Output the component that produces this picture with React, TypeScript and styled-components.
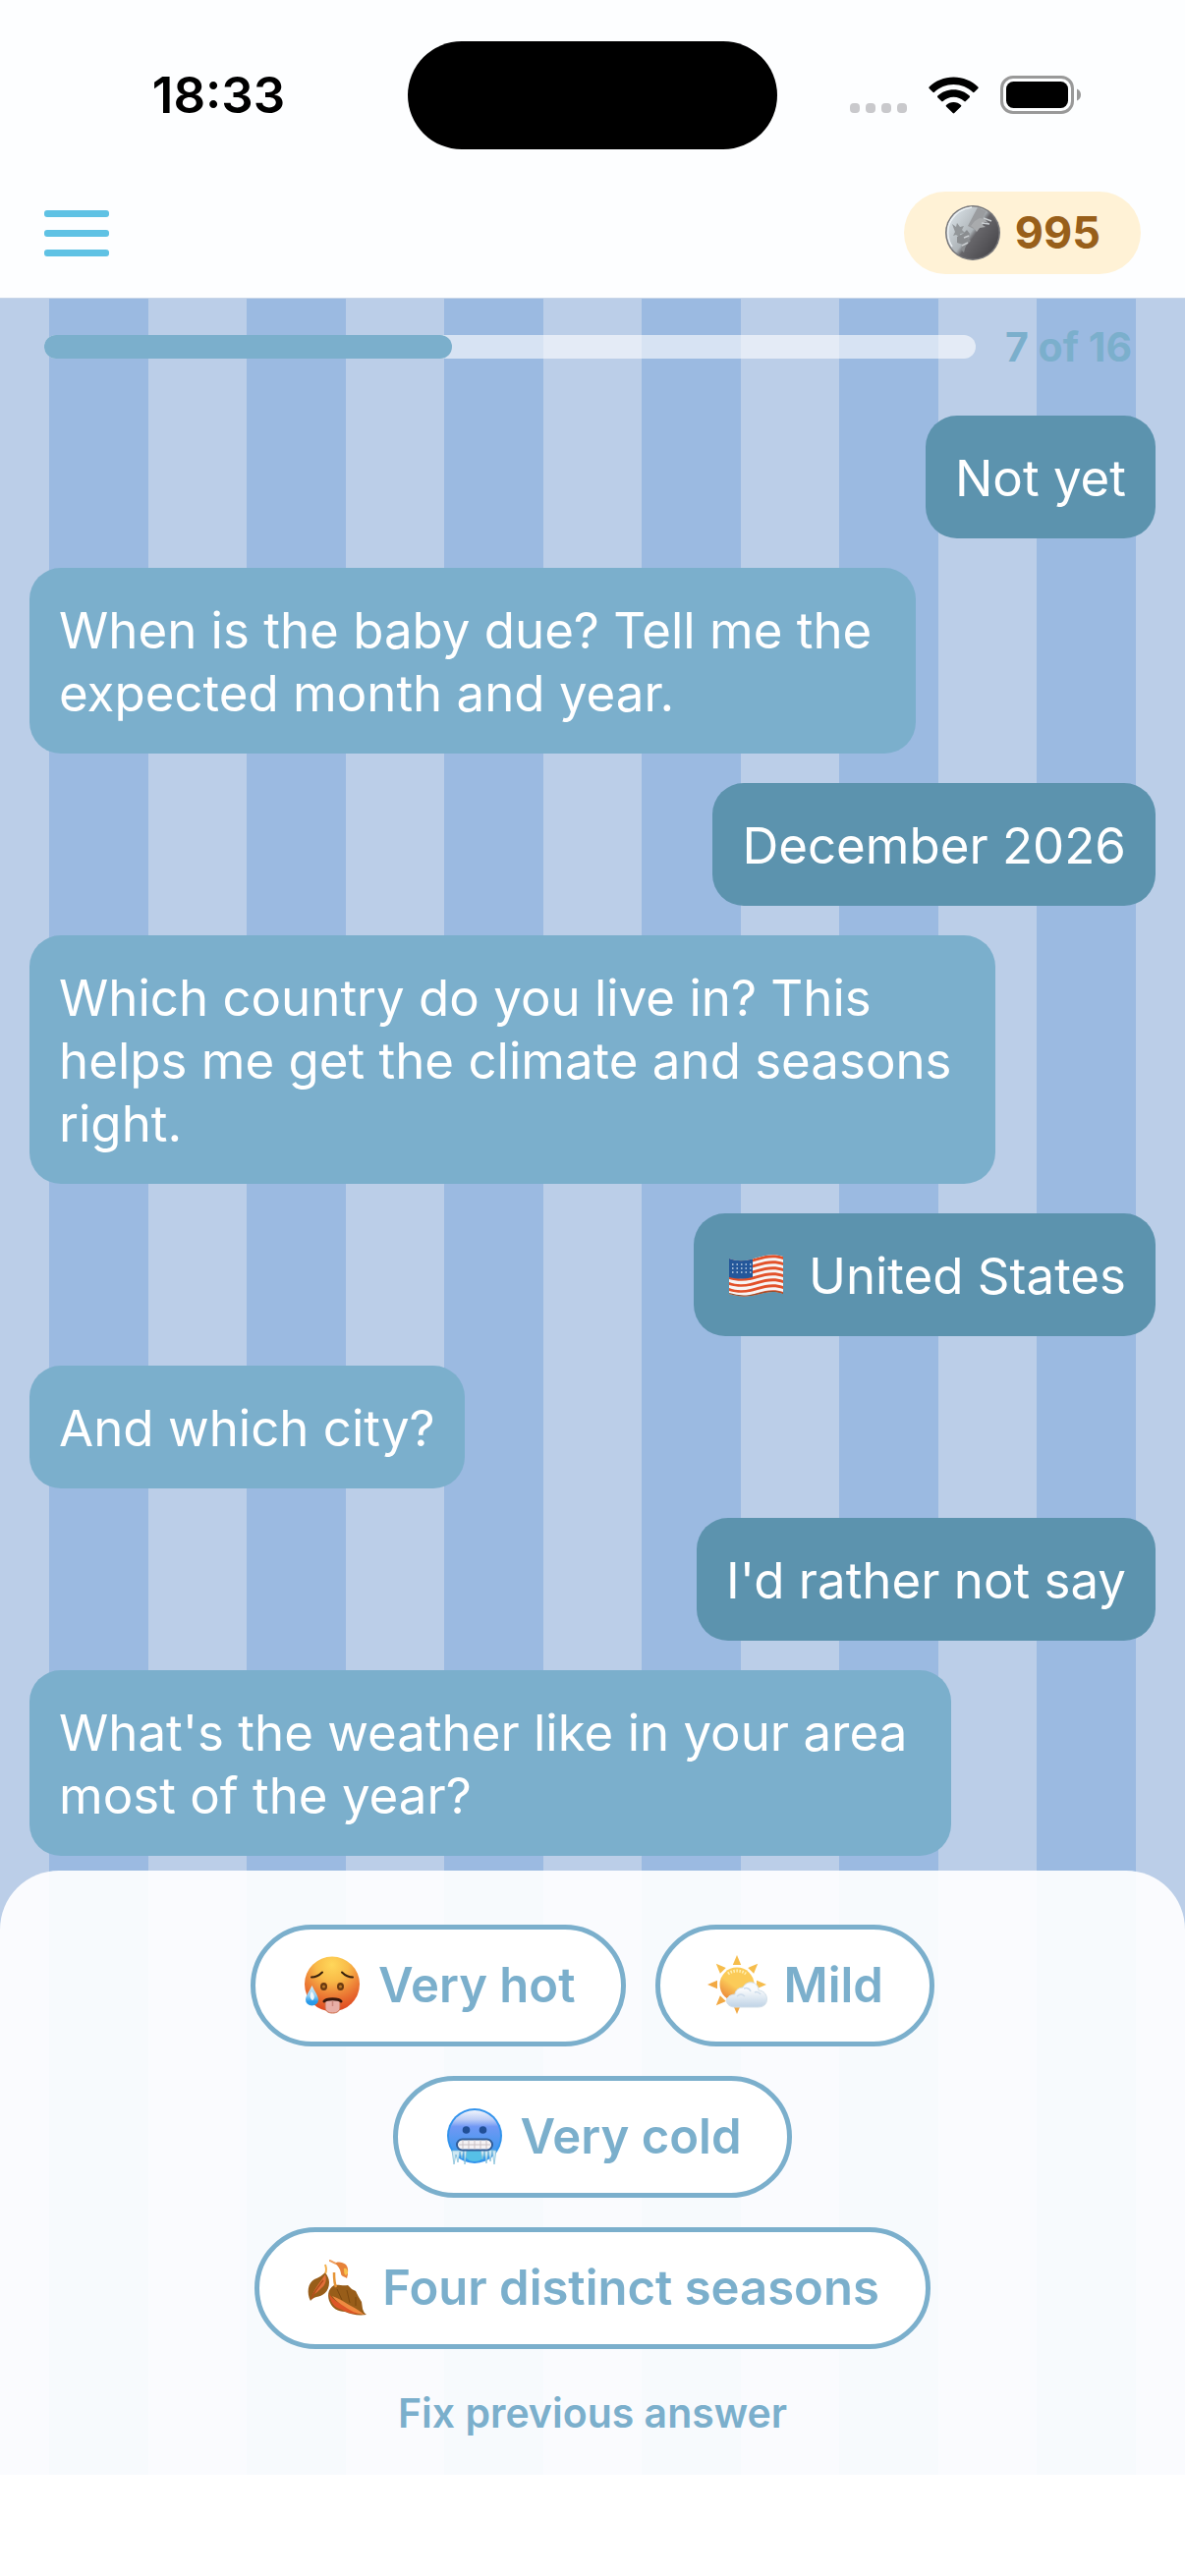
import React from "react";
import styled, { createGlobalStyle } from "styled-components";

const color = {
  page: "#fdfeff",
  stripeLight: "#bbcee8",
  stripeDark: "#9bbae1",
  accent: "#7bafcc",
  answer: "#5c93ae",
  menu: "#5fc2e4",
  pill: "#fff2d6",
  coins: "#985f1a",
};

const GlobalStyle = createGlobalStyle`
  *, *::before, *::after { box-sizing: border-box; }
  body {
    margin: 0;
    background: #ffffff;
    font-family: Inter, "Liberation Sans", sans-serif;
  }
  button { font-family: inherit; cursor: pointer; }
`;

const Screen = styled.div`
  display: flex;
  flex-direction: column;
  min-height: 100vh;
`;

const StatusBar = styled.div`
  display: grid;
  grid-template-columns: 1fr 376px 1fr;
  align-items: center;
  padding: 42px 0 33px;
  background: ${color.page};
`;

const Clock = styled.time`
  justify-self: center;
  padding-left: 30px;
  font-size: 51px;
  line-height: 60px;
  font-weight: 600;
  color: #000000;
`;

const Island = styled.div`
  height: 110px;
  border-radius: 55px;
  background: #000000;
`;

const StatusIcons = styled.div`
  display: flex;
  align-items: center;
  justify-self: center;
  gap: 22px;
  padding-right: 32px;
  svg { display: block; }
`;

const TopBar = styled.header`
  display: flex;
  align-items: center;
  justify-content: space-between;
  padding: 10px 45px 24px;
  background: ${color.page};
  border-bottom: 1px solid #c9d6e8;
`;

const MenuButton = styled.button`
  display: flex;
  flex-direction: column;
  gap: 13px;
  width: 66px;
  padding: 0;
  border: 0;
  background: none;
`;

const MenuLine = styled.span`
  height: 7px;
  border-radius: 3px;
  background: ${color.menu};
`;

const CoinPill = styled.button`
  display: flex;
  align-items: center;
  gap: 14px;
  height: 84px;
  padding: 0 41px;
  border: 0;
  border-radius: 42px;
  background: ${color.pill};
  color: ${color.coins};
  font-size: 45px;
  line-height: 54px;
  font-weight: 700;
  svg { display: block; }
`;

const Conversation = styled.main`
  flex: 1;
  display: flex;
  flex-direction: column;
  background-image: linear-gradient(
    to right,
    ${color.stripeLight} 25%,
    ${color.stripeDark} 25% 75%,
    ${color.stripeLight} 75%
  );
  background-size: calc(100% / 6) 100%;
`;

const ProgressRow = styled.div`
  display: flex;
  align-items: center;
  gap: 30px;
  padding: 24px 45px 45px;
`;

const Track = styled.div`
  flex: 1;
  height: 24px;
  border-radius: 12px;
  background: rgba(255, 255, 255, 0.6);
`;

const Fill = styled.div`
  height: 100%;
  border-radius: 12px;
  background: ${color.accent};
`;

const StepLabel = styled.span`
  min-width: 138px;
  font-size: 41px;
  line-height: 50px;
  font-weight: 700;
  color: ${color.accent};
  white-space: nowrap;
`;

const Messages = styled.div`
  flex: 1;
  display: flex;
  flex-direction: column;
  gap: 30px;
  padding: 0 30px 15px;
`;

const Bubble = styled.p<{ $mine?: boolean }>`
  align-self: ${(p) => (p.$mine ? "flex-end" : "flex-start")};
  display: flex;
  align-items: center;
  gap: 22px;
  max-width: 88%;
  margin: 0;
  padding: 32px 30px 29px;
  border-radius: 32px;
  background: ${(p) => (p.$mine ? color.answer : color.accent)};
  color: #ffffff;
  font-size: 51px;
  line-height: 64px;
  white-space: break-spaces;
  svg { display: block; }
`;

const AnswerPanel = styled.section`
  display: flex;
  flex-direction: column;
  align-items: center;
  gap: 40px;
  padding: 55px 45px 38px;
  border-radius: 60px 60px 0 0;
  background: rgba(255, 255, 255, 0.92);
`;

const Choices = styled.div`
  display: flex;
  flex-wrap: wrap;
  justify-content: center;
  gap: 30px;
`;

const Choice = styled.button`
  display: flex;
  align-items: center;
  gap: 16px;
  height: 124px;
  padding: 0 47px;
  border: 5px solid ${color.accent};
  border-radius: 62px;
  background: #ffffff;
  color: ${color.accent};
  font-size: 49px;
  line-height: 60px;
  font-weight: 600;
  svg { display: block; }
`;

const FixButton = styled.button`
  padding: 0;
  border: 0;
  background: none;
  color: ${color.accent};
  font-size: 41px;
  line-height: 50px;
  font-weight: 600;
`;

const SafeArea = styled.div`
  height: 103px;
  background: #ffffff;
`;

const SignalDots = () => (
  <svg width="58" height="38" viewBox="0 0 58 38" aria-hidden="true">
    {[0, 16, 32, 48].map((x) => (
      <rect key={x} x={x} y="27" width="10" height="10" rx="4" fill="#c9c9cc" />
    ))}
  </svg>
);

const Wifi = () => (
  <svg width="51" height="38" viewBox="0 0 51 38" aria-hidden="true">
    <path d="M25.500 0.500C35.200 0.500 44.000 4.300 50.400 10.400C50.900 10.900 50.900 11.500 50.400 12.000L46.600 15.800C46.100 16.300 45.500 16.300 45.000 15.800C39.900 11.000 33.000 8.000 25.500 8.000C18.000 8.000 11.100 11.000 6.000 15.800C5.500 16.300 4.900 16.300 4.400 15.800L0.600 12.000C0.100 11.500 0.100 10.900 0.600 10.400C7.000 4.300 15.800 0.500 25.500 0.500Z" />
    <path d="M25.500 13.200C31.800 13.200 37.500 15.600 41.700 19.600C42.200 20.100 42.200 20.700 41.700 21.200L37.800 25.000C37.300 25.500 36.800 25.500 36.300 25.000C33.400 22.400 29.600 20.800 25.500 20.800C21.400 20.800 17.600 22.400 14.700 25.000C14.200 25.500 13.700 25.500 13.200 25.000L9.300 21.200C8.800 20.700 8.800 20.100 9.300 19.600C13.500 15.600 19.200 13.200 25.500 13.200Z" />
    <path d="M25.500 26C28.400 26 31 27.100 33 28.900C33.500 29.400 33.500 29.900 33 30.400L26.300 37.100C25.800 37.600 25.200 37.600 24.700 37.100L18 30.400C17.500 29.900 17.500 29.400 18 28.900C20 27.100 22.600 26 25.500 26Z" />
  </svg>
);

const Battery = () => (
  <svg width="82" height="40" viewBox="0 0 82 40" aria-hidden="true">
    <rect x="1.500" y="1.500" width="72" height="36" rx="11.500" fill="none" stroke="#999" strokeWidth="3" />
    <rect x="6" y="6" width="63" height="27" rx="7.500" />
    <path d="M78 13.500C80.500 14.500 82 16.800 82 19.500S80.500 24.500 78 25.500Z" fill="#999" />
  </svg>
);

const Coin = () => (
  <svg width="58" height="58" viewBox="0 0 58 58" aria-hidden="true">
    <defs>
      <linearGradient id="coinFace" x1="0.100" y1="0.200" x2="0.900" y2="0.800">
        <stop offset="0" stopColor="#d3dbe0" />
        <stop offset="0.460" stopColor="#aeb4b8" />
        <stop offset="0.560" stopColor="#67666a" />
        <stop offset="1" stopColor="#4b4a4e" />
      </linearGradient>
    </defs>
    <circle cx="29" cy="29" r="28" fill="#77777a" />
    <circle cx="29" cy="29" r="26.500" fill="url(#coinFace)" />
    <path d="M34 3L43 7L37 17L30 25L24 22Z" fill="#9a9c9f" />
    <path d="M8 20l4 3 1-4 3 4 4-1-2 4 3 3-5 1 1 4-5-3-3 1 2-4z" fill="#929699" />
    <path d="M31 17l5-3 5 1 4 4-4-1-2 3 3 2-6 1-3 4-3-4-3-2z" fill="#a9abad" />
    <path d="M13 33l6-3 4-4 3 4-2 5 3 2-5 5-2 7-3-3 2-5-6-2z" fill="#8a8d90" />
    <path d="M20 34l5-2M18 42l6-3M40 14l8 3M38 19l8 1" stroke="#c9cdd0" strokeWidth="1.500" />
    <path d="M8 43C3 36 2 24 7 16S19 4 28 3" stroke="#edf2f5" strokeWidth="1.500" fill="none" />
  </svg>
);

const UsFlag = () => (
  <svg width="65" height="64" viewBox="-3 1 65 64" aria-hidden="true">
    <defs>
      <clipPath id="flagShape">
        <path d="M3 15C13 19 23 17 32 14S50 10 58 13V51C48 47 39 50 30 52S12 54 3 51Z" />
      </clipPath>
    </defs>
    <g clipPath="url(#flagShape)">
      <rect width="62" height="64" fill="#f7f5f5" />
      {[0, 1, 2, 3, 4, 5, 6].map((i) => (
        <path
          key={i}
          transform={`translate(0 ${i * 6})`}
          d="M3 15C13 19 23 17 32 14S50 10 58 13V16C50 13 41 14 32 17S13 21 3 18Z"
          fill="#e2512a"
        />
      ))}
      <path d="M3 13H27V34C18 36 12 36 3 34Z" fill="#24579a" />
      {[21, 25, 29].map((y) => (
        <path key={y} d={`M6 ${y}H26`} stroke="#c5d6e8" strokeWidth="1.500" strokeDasharray="1.500 3" />
      ))}
      <path d="M3 51C12 54 21 54 30 52S48 47 58 51" stroke="#8d5030" strokeWidth="2" fill="none" />
    </g>
  </svg>
);

const HotFace = () => (
  <svg width="62" height="64" viewBox="0 0 62 64" aria-hidden="true">
    <defs>
      <radialGradient id="hotSkin" cx="0.500" cy="0.150" r="0.850">
        <stop offset="0" stopColor="#ffd75a" />
        <stop offset="0.350" stopColor="#f9bb48" />
        <stop offset="0.620" stopColor="#ee8538" />
        <stop offset="1" stopColor="#de4520" />
      </radialGradient>
      <linearGradient id="sweat" x1="0" y1="0" x2="0" y2="1">
        <stop offset="0" stopColor="#d9f0fb" />
        <stop offset="0.500" stopColor="#8fcdf2" />
        <stop offset="0.800" stopColor="#2a9be9" />
      </linearGradient>
    </defs>
    <circle cx="31" cy="30.500" r="28" fill="url(#hotSkin)" />
    <path d="M10 23.500C15 23.500 18 21.500 21 18.500M52 23.500C47 23.500 44 21.500 41 18.500" stroke="#38200d" strokeWidth="2" fill="none" strokeLinecap="round" />
    <ellipse cx="22.500" cy="33" rx="3.500" ry="4" fill="#6b3a11" />
    <ellipse cx="39.500" cy="33" rx="3.500" ry="4" fill="#6b3a11" />
    <circle cx="22.500" cy="33" r="1.500" fill="#bd7a28" />
    <circle cx="39.500" cy="33" r="1.500" fill="#bd7a28" />
    <path d="M24 46H39V54C39 58 36 60 31.500 60S24 58 24 54Z" fill="#e8aea6" stroke="#ce6b45" />
    <path d="M31.500 48V53" stroke="#cc877d" strokeWidth="1.500" />
    <path d="M23 48C25 45 38 45 40 48" stroke="#38170c" strokeWidth="3" fill="none" strokeLinecap="round" />
    <path d="M10.500 32C7 39 4 43 4 46.500A6.500 6 0 0 0 17 46.500C17 43 14 39 10.500 32Z" fill="url(#sweat)" />
    <path d="M10 38C8 42 8 45 11 47C14 45 13 41 10 38Z" fill="#edf8fd" />
  </svg>
);

const SunCloud = () => (
  <svg width="62" height="64" viewBox="0 0 62 64" aria-hidden="true">
    <defs>
      <linearGradient id="sunDisc" x1="0.700" y1="0.200" x2="0.200" y2="0.900">
        <stop offset="0.500" stopColor="#fbcb58" />
        <stop offset="1" stopColor="#ed8c3c" />
      </linearGradient>
      <linearGradient id="cloud" x1="0" y1="0" x2="0" y2="1">
        <stop offset="0.300" stopColor="#f8fafc" />
        <stop offset="1" stopColor="#bfd3e6" />
      </linearGradient>
    </defs>
    {[0, 45, 90, 135, 180, 225, 270, 315].map((a) => (
      <path key={a} d="M31 1L35.200 11H26.800Z" fill={a > 150 && a < 300 ? "#f2a944" : "#f6bd4c"} transform={`rotate(${a} 31 31)`} />
    ))}
    <circle cx="31" cy="31" r="17.500" fill="url(#sunDisc)" />
    <path d="M22 20C27 16 35 16 40 20" stroke="#fff0b5" strokeWidth="3" strokeDasharray="1.500 1.500" fill="none" />
    <path d="M29 54C24 54 20.500 51 20.500 47.500S24 41 29 41C29 37 33 34 37 34C39 30 43 28 47 29C51 30 53 33 53 37C58 37 61.500 41 61.500 46S58 54 52 54Z" fill="url(#cloud)" stroke="#d3dfe9" strokeWidth="1" />
    <path d="M31 43C34 40 37 41 39 43M38 35C41 34 44 35 45 38M49 39C51 38 54 39 55 41" stroke="#cddceb" strokeWidth="1.500" fill="none" />
  </svg>
);

const ColdFace = () => (
  <svg width="62" height="64" viewBox="0 0 62 64" aria-hidden="true">
    <defs>
      <linearGradient id="coldSkin" x1="0" y1="0" x2="0" y2="1">
        <stop offset="0" stopColor="#f0f4fc" />
        <stop offset="0.180" stopColor="#bdcdf6" />
        <stop offset="0.320" stopColor="#7098f4" />
        <stop offset="0.650" stopColor="#4e98f0" />
        <stop offset="1" stopColor="#2f9cec" />
      </linearGradient>
    </defs>
    <circle cx="31" cy="31" r="28" fill="#3293ec" />
    <circle cx="31" cy="31" r="26" fill="url(#coldSkin)" />
    <circle cx="22.500" cy="25" r="3.800" fill="#214f97" />
    <circle cx="39.500" cy="25" r="3.800" fill="#214f97" />
    <path d="M21 46H41C43 52 38 57 31 57S19 52 21 46Z" fill="#56c0e7" />
    <path d="M8 46L10 60L12 50L14 58L16 47L18 54L20 45L21 60L23 46ZM37 45L39 55L41 46L43 59L45 46L47 57L49 46L51 60L53 46Z" fill="#cfe8f3" stroke="#76b8d5" strokeWidth="0.700" />
    <rect x="13" y="34.500" width="36" height="11" rx="5.500" fill="#f5f2f4" stroke="#305c98" strokeWidth="2" />
    <path d="M15 40H47M19 35.500V44.500M25 35.500V44.500M31 35.500V44.500M37 35.500V44.500M43 35.500V44.500" stroke="#c9c0c4" strokeWidth="1" />
  </svg>
);

const Leaves = () => (
  <svg width="62" height="64" viewBox="0 0 62 64" aria-hidden="true">
    <path d="M5 45C1 37 2 27 9 23C14 21 17 19 20 16C22 19 24 22 24 26C24 36 17 40 11 41C8 42 6 43 5 45Z" fill="#985d19" />
    <path d="M7 39C10 31 15 26 20 18C22 24 20 29 16 32C13 35 11 37 7 39Z" fill="#e2703a" />
    <path d="M6 43C8 36 13 31 18 24" stroke="#b04e1c" strokeWidth="1.500" fill="none" />
    <path d="M20 17C22 14 21 11 20 8" stroke="#f3b04c" strokeWidth="2" fill="none" />
    <path d="M29 29C33 28 38 30 43 29L47 33L51 35L54 41L57 46L58 53C59 56 60 58 62 59C54 60 47 59 40 56C33 56 27 52 25 47C22 41 22 33 29 29Z" fill="#985d19" />
    <path d="M24 38C28 44 33 47 39 49C45 50 50 53 55 58C47 59 41 56 37 54C29 52 25 46 24 38Z" fill="#dd5527" />
    <path d="M27 40C36 43 40 47 46 50C52 53 56 56 60 59C51 58 46 55 40 51C35 48 31 45 27 40Z" fill="#ef8a40" />
    <path d="M32 33L37 44M42 34L45 47M51 41L51 50" stroke="#7b480f" strokeWidth="1" fill="none" />
    <path d="M31 31C29 27 29 22 29 16" stroke="#e59538" strokeWidth="2.500" fill="none" />
    <path d="M24 4C27 4 29 6 31 6C35 5 38 6 41 8C44 12 43 15 43 18L42 22C39 20 36 20 36 17C35 12 33 9 30 7Z" fill="#e68239" />
    <path d="M39 12C42 11 43 14 43 17L41 19C39 18 39 15 39 12Z" fill="#f8c24c" />
    <path d="M31 7C28 6 26 4 24 4" stroke="#f0a060" strokeWidth="2" fill="none" />
  </svg>
);

type Message = { text: string; mine?: boolean; flag?: boolean };

const messages: Message[] = [
  { text: "Not yet", mine: true },
  { text: "When is the baby due? Tell me the \nexpected month and year." },
  { text: "December 2026", mine: true },
  { text: "Which country do you live in? This \nhelps me get the climate and seasons \nright." },
  { text: "United States", mine: true, flag: true },
  { text: "And which city?" },
  { text: "I'd rather not say", mine: true },
  { text: "What's the weather like in your area \nmost of the year?" },
];

const choices = [
  { label: "Very hot", Icon: HotFace },
  { label: "Mild", Icon: SunCloud },
  { label: "Very cold", Icon: ColdFace },
  { label: "Four distinct seasons", Icon: Leaves },
];

const step = 7;
const steps = 16;

export default function App() {
  return (
    <>
      <GlobalStyle />
      <Screen>
        <StatusBar>
          <Clock>18:33</Clock>
          <Island />
          <StatusIcons>
            <SignalDots />
            <Wifi />
            <Battery />
          </StatusIcons>
        </StatusBar>
        <TopBar>
          <MenuButton aria-label="Menu">
            <MenuLine />
            <MenuLine />
            <MenuLine />
          </MenuButton>
          <CoinPill>
            <Coin />
            <span>995</span>
          </CoinPill>
        </TopBar>
        <Conversation>
          <ProgressRow>
            <Track role="progressbar" aria-valuenow={step} aria-valuemin={0} aria-valuemax={steps} aria-label="Questions answered">
              <Fill style={{ width: `${(step / steps) * 100}%` }} />
            </Track>
            <StepLabel>{`${step} of ${steps}`}</StepLabel>
          </ProgressRow>
          <Messages>
            {messages.map((m) => (
              <Bubble key={m.text} $mine={m.mine}>
                {m.flag && <UsFlag />}
                <span>{m.text}</span>
              </Bubble>
            ))}
          </Messages>
          <AnswerPanel>
            <Choices>
              {choices.map(({ label, Icon }) => (
                <Choice key={label}>
                  <Icon />
                  <span>{label}</span>
                </Choice>
              ))}
            </Choices>
            <FixButton>Fix previous answer</FixButton>
          </AnswerPanel>
        </Conversation>
        <SafeArea />
      </Screen>
    </>
  );
}
